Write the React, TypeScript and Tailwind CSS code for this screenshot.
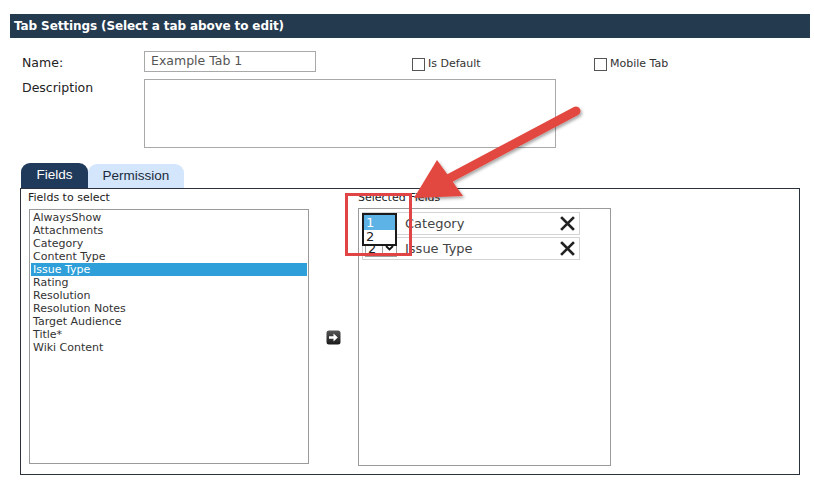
import React from "react";

const fields = [
  "AlwaysShow",
  "Attachments",
  "Category",
  "Content Type",
  "Issue Type",
  "Rating",
  "Resolution",
  "Resolution Notes",
  "Target Audience",
  "Title*",
  "Wiki Content",
];

function XIcon() {
  return (
    <svg width="15" height="15" viewBox="0 0 15 15">
      <path d="M2 2 L13 13 M13 2 L2 13" stroke="#222" strokeWidth="2.6" strokeLinecap="square" />
    </svg>
  );
}

function SelectedRow({ num, label }: { num: string; label: string }) {
  return (
    <div className="flex items-center w-[218px] h-[23px] border border-[#d4d4d4] bg-white">
      <div className="ml-[2px] flex items-center h-[17px] w-[32px] border border-[#a0a0a0] bg-white">
        <span className="pl-[2px] text-[13px] leading-none text-[#222] w-[16px]">{num}</span>
        <span className="flex-1 h-full border-l border-[#a0a0a0] flex items-center justify-center">
          <svg width="9" height="6" viewBox="0 0 9 6">
            <path d="M1 1 L4.5 4.5 L8 1" stroke="#111" strokeWidth="1.8" fill="none" />
          </svg>
        </span>
      </div>
      <span className="ml-[8px] text-[13px] text-[#444]">{label}</span>
      <span className="ml-auto mr-[4px] flex items-center">
        <XIcon />
      </span>
    </div>
  );
}

export default function App() {
  return (
    <div
      className="relative w-[814px] h-[485px] bg-white overflow-hidden text-[#333]"
      style={{ fontFamily: '"DejaVu Sans", Verdana, sans-serif' }}
    >
      {/* Header bar */}
      <div className="mt-[14px] ml-[10px] mr-[4px] h-[24px] bg-[#243a4f] flex items-center pl-[4px]">
        <span className="text-white font-bold text-[12px] tracking-[-0.1px]">
          Tab Settings (Select a tab above to edit)
        </span>
      </div>

      {/* Name row */}
      <div className="mt-[13px] flex items-start">
        <div className="w-[144px] pl-[22px] pt-[3px] text-[12.5px] text-[#222]">Name:</div>
        <div className="w-[172px] h-[21px] border border-[#a9a9a9] flex items-center pl-[6px] text-[12.5px] text-[#555]">
          Example Tab 1
        </div>
        <label className="ml-[96px] mt-[5px] w-[182px] flex items-center">
          <span className="w-[13px] h-[13px] border border-[#555] bg-white" />
          <span className="ml-[3px] text-[11px] text-[#333]">Is Default</span>
        </label>
        <label className="mt-[5px] flex items-center">
          <span className="w-[13px] h-[13px] border border-[#555] bg-white" />
          <span className="ml-[3px] text-[11px] text-[#333]">Mobile Tab</span>
        </label>
      </div>

      {/* Description row */}
      <div className="mt-[6px] flex items-start">
        <div className="w-[144px] pl-[22px] text-[12.5px] text-[#222]">Description</div>
        <div className="w-[412px] h-[69px] border border-[#a9a9a9]" />
      </div>

      {/* Tabs */}
      <div
        className="mt-[15px] ml-[21px] flex items-end h-[25px]"
        style={{ fontFamily: '"Liberation Sans", Arial, sans-serif' }}
      >
        <div className="w-[67px] h-[25px] bg-[#1f3a5a] rounded-t-[9px] flex items-center justify-center text-white text-[13.5px]">
          Fields
        </div>
        <div className="w-[96px] h-[24px] bg-[#d3e6fb] rounded-t-[9px] flex items-center justify-center text-[#1b2b3b] text-[13.5px]">
          Permission
        </div>
      </div>

      {/* Panel */}
      <div className="ml-[20px] w-[780px] h-[287px] border border-[#2a333d] flex">
        {/* Left column */}
        <div className="pl-[7px] pt-[2px] flex flex-col">
          <div className="text-[11px] text-[#222] leading-[14px]">Fields to select</div>
          <div className="mt-[4px] ml-[1px] w-[280px] h-[255px] border border-[#9a9a9a] pt-[1px] pl-[1px] pr-[1px]">
            {fields.map((f) => (
              <div
                key={f}
                className={
                  "pl-[2px] h-[13px] text-[11px] leading-[13px] " +
                  (f === "Issue Type" ? "bg-[#2e9fd8] text-white" : "text-[#333]")
                }
              >
                {f}
              </div>
            ))}
          </div>
        </div>

        {/* Middle arrow button */}
        <div className="w-[49px] flex justify-center pt-[141px]">
          <svg width="15" height="15" viewBox="0 0 15 15" className="mr-[1px]">
            <defs>
              <linearGradient id="bg" x1="0" y1="0" x2="0" y2="1">
                <stop offset="0" stopColor="#555" />
                <stop offset="1" stopColor="#1a1a1a" />
              </linearGradient>
            </defs>
            <rect x="0.5" y="0.5" width="14" height="14" rx="2.5" fill="url(#bg)" />
            <path d="M3 6.2 H7.5 V3.5 L11.8 7.5 L7.5 11.5 V8.8 H3 Z" fill="#fff" />
          </svg>
        </div>

        {/* Right column */}
        <div className="pt-[2px] flex flex-col">
          <div className="text-[11px] text-[#222] leading-[14px]">Selected Fields</div>
          <div className="mt-[3px] w-[253px] h-[258px] border border-[#9a9a9a] pt-[3px] pl-[3px] flex flex-col gap-[2px]">
            <SelectedRow num="1" label="Category" />
            <SelectedRow num="2" label="Issue Type" />
          </div>
        </div>
      </div>

      {/* Open dropdown overlay */}
      <div className="absolute left-[362px] top-[213px] w-[35px] h-[33px] border-2 border-[#1a1a1a] bg-white">
        <div className="h-[15px] bg-[#5db3e6] text-white text-[13px] leading-[15px] pl-[2px]">1</div>
        <div className="h-[14px] text-[#222] text-[13px] leading-[14px] pl-[2px]">2</div>
      </div>

      {/* Red highlight rectangle */}
      <div className="absolute left-[345px] top-[193px] w-[67px] h-[63px] border-[3px] border-[#e04444]" />

      {/* Red arrow */}
      <svg className="absolute left-0 top-0 pointer-events-none" width="814" height="485" viewBox="0 0 814 485">
        <defs>
          <filter id="sh" x="-20%" y="-20%" width="140%" height="140%">
            <feDropShadow dx="1.5" dy="2" stdDeviation="1.5" floodColor="#000" floodOpacity="0.35" />
          </filter>
        </defs>
        <g filter="url(#sh)">
          <line x1="576" y1="111" x2="448" y2="179" stroke="#e2473f" strokeWidth="9" strokeLinecap="round" />
          <path d="M414 198 L437 160 L463 196 Z" fill="#e2473f" />
        </g>
      </svg>
    </div>
  );
}
